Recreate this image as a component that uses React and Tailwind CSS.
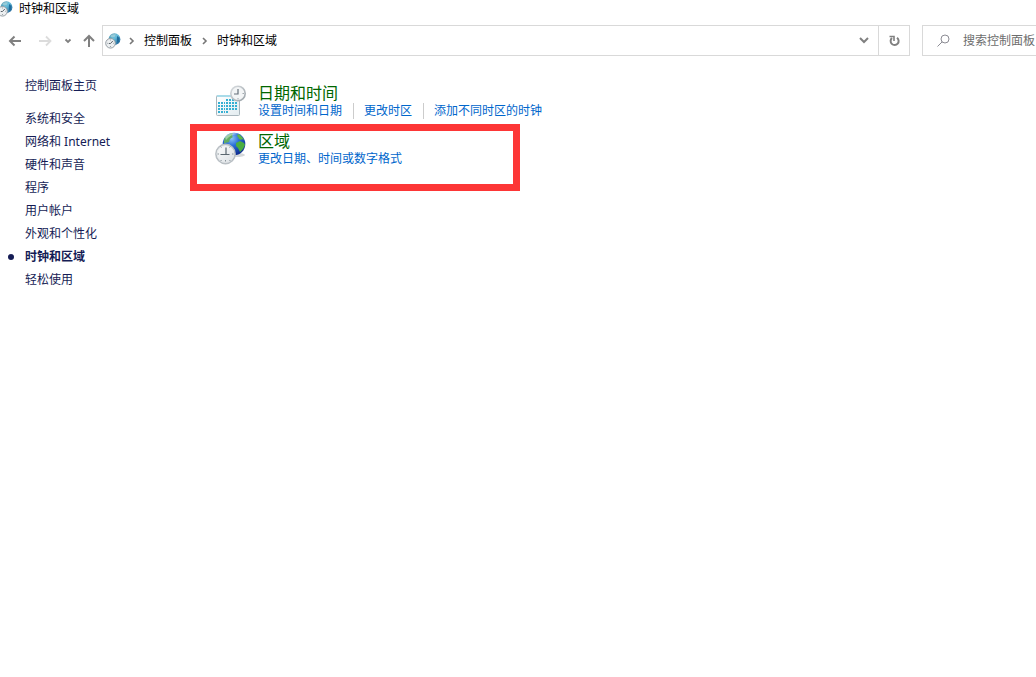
import React from 'react';

const categories = [
    '系统和安全',
    '网络和 Internet',
    '硬件和声音',
    '程序',
    '用户帐户',
    '外观和个性化',
    '时钟和区域',
    '轻松使用',
];

const currentCategory = '时钟和区域';

const SmallClockGlobe = ({ className }) => (
    <svg className={className} width="16" height="16" viewBox="0 0 16 16" aria-hidden="true">
        <defs>
            <linearGradient id="smallGlobe" x1="0" y1="0" x2="1" y2="1">
                <stop offset="0" stopColor="#4b8ba3" />
                <stop offset="0.45" stopColor="#69bfdc" />
                <stop offset="1" stopColor="#16548c" />
            </linearGradient>
        </defs>
        <circle cx="9.500" cy="6.200" r="5.900" fill="url(#smallGlobe)" />
        <path d="M5 3c2-2 4-2.200 6-1.400L9.500 4 7 4.500z" fill="#a5d2dc" opacity="0.8" />
        <path d="M12 3l2.500 2-.6 4-2 1z" fill="#1f6c9c" />
        <circle cx="5.500" cy="10.300" r="4.800" fill="#eceff1" stroke="#959da3" strokeWidth="1" />
        <path d="M5.500 10.500L7.800 8M5.500 10.500H3.800" stroke="#59626a" strokeWidth="1" fill="none" />
        <path d="M5.500 6.500v1M5.500 13v1M2.200 10.300h.8M8.200 10.300H9" stroke="#8a9298" strokeWidth="0.800" />
    </svg>
);

const CalendarIcon = () => (
    <svg width="32" height="34" viewBox="0 0 32 34" aria-hidden="true">
        <defs>
            <linearGradient id="calPage" x1="0" y1="0" x2="1" y2="1">
                <stop offset="0" stopColor="#ffffff" />
                <stop offset="1" stopColor="#e3ecf0" />
            </linearGradient>
            <linearGradient id="calRim" x1="0" y1="0" x2="1" y2="1">
                <stop offset="0" stopColor="#dadee1" />
                <stop offset="1" stopColor="#9aa2a8" />
            </linearGradient>
        </defs>
        <rect x="2.500" y="12.500" width="23" height="20" rx="1" fill="url(#calPage)" stroke="#a9b6bd" />
        <path d="M3 12h22v2H3z" fill="#a9dbe9" />
        <g fill="#35b0d3">
            <path d="M12 16h2v2h-2zM15 16h2v2h-2zM18 16h2v2h-2zM21 16h2v2h-2z" />
            <path d="M4 19h2v2H4zM7 19h2v2H7zM10 19h1v2h-1zM12 19h2v2h-2zM15 19h2v2h-2zM18 19h2v2h-2zM21 19h2v2h-2z" />
            <path d="M4 22h2v2H4zM7 22h2v2H7zM10 22h1v2h-1zM12 22h2v2h-2zM15 22h2v2h-2zM18 22h2v2h-2zM21 22h2v2h-2z" />
            <path d="M4 25h2v2H4zM7 25h2v2H7zM10 25h1v2h-1zM12 25h2v2h-2zM15 25h2v2h-2zM18 25h2v2h-2zM21 25h2v2h-2z" />
            <path d="M4 28h2v2H4zM7 28h2v2H7zM10 28h1v2h-1zM12 28h2v2h-2z" />
        </g>
        <circle cx="24" cy="10.500" r="7.200" fill="#f3f5f6" stroke="url(#calRim)" strokeWidth="1.600" />
        <path d="M24 6v5h-4" stroke="#66717a" strokeWidth="1.200" fill="none" />
        <path d="M24 15v1.500M28.500 10.500H30" stroke="#a0a8ae" />
    </svg>
);

const RegionIcon = () => (
    <svg width="32" height="34" viewBox="0 0 32 34" aria-hidden="true">
        <defs>
            <radialGradient id="ocean" cx="0.4" cy="0.25" r="0.8">
                <stop offset="0" stopColor="#8fc6f5" />
                <stop offset="0.4" stopColor="#2b6fd8" />
                <stop offset="1" stopColor="#0a2488" />
            </radialGradient>
            <linearGradient id="clockFace" x1="0" y1="0" x2="1" y2="1">
                <stop offset="0" stopColor="#ffffff" />
                <stop offset="1" stopColor="#d9dee2" />
            </linearGradient>
        </defs>
        <ellipse cx="22" cy="24" rx="9" ry="2" fill="#b8bcc0" opacity="0.6" />
        <circle cx="20" cy="13" r="11.300" fill="url(#ocean)" />
        <path d="M10 9c1-4 5-6.500 9-7l-1 3 1 1-3 2-1 3-4 1-1 1z" fill="#62ad62" />
        <path d="M24 3c3 1 5 4 6 6l-2-1-1 1-2-1-1-2-1-1z" fill="#5cb548" />
        <path d="M22 12l4-2 4 2 1 2-2 4-3 3-2-4-2-2z" fill="#4bae42" />
        <path d="M11 6c3-4 9-5 13-3-5 0-9 2-12 6z" fill="#ffffff" opacity="0.4" />
        <circle cx="11.500" cy="23" r="9.600" fill="url(#clockFace)" stroke="#b9bfc4" strokeWidth="1.600" />
        <circle cx="11.500" cy="23" r="8.300" fill="none" stroke="#e3e7ea" strokeWidth="0.800" />
        <path d="M12 16.500v7H6.500M12 23.500h3.500" stroke="#5b6770" strokeWidth="1.200" fill="none" />
        <path d="M11.500 29v1.500M18 23h1.500M3.500 23H5M15.500 16.500l.8-1M7.500 16.500l-.8-1M15.500 29l.8 1M7.500 29l-.8 1" stroke="#8a949b" />
    </svg>
);

const Arrow = ({ d, className }) => (
    <svg className={className} width="14" height="14" viewBox="0 0 14 14" fill="none" stroke="currentColor" aria-hidden="true">
        <path d={d} />
    </svg>
);

const Chevron = () => (
    <svg width="6" height="8" viewBox="0 0 6 8" fill="none" stroke="#777777" strokeWidth="1.600" aria-hidden="true">
        <path d="M1 1l3 3-3 3" />
    </svg>
);

const Toolbar = () => (
    <div className="mt-2 flex h-[31px] items-stretch text-[#808080]">
        <nav className="flex w-[102px] shrink-0 items-center pl-2" aria-label="导航">
            <button type="button" aria-label="后退">
                <Arrow className="stroke-2" d="M13 7H2M6.500 2.500L2 7l4.500 4.500" />
            </button>
            <button type="button" aria-label="前进" className="ml-4 text-[#dcdcdc]">
                <Arrow className="stroke-[1.8]" d="M1 7h11.500M8 2.500L12.500 7 8 11.500" />
            </button>
            <button type="button" aria-label="最近浏览的位置" className="ml-3">
                <svg width="8" height="6" viewBox="0 0 8 6" fill="none" stroke="currentColor" strokeWidth="1.800" aria-hidden="true">
                    <path d="M1.500 1.500L4 4l2.500-2.500" />
                </svg>
            </button>
            <button type="button" aria-label="上移" className="ml-2.5">
                <Arrow className="stroke-2" d="M7 13V2M2 7l5-5 5 5" />
            </button>
        </nav>

        <div className="flex min-w-0 flex-1 border border-[#d9d9d9]">
            <div className="flex flex-1 items-center pl-0.5 text-black">
                <SmallClockGlobe />
                <span className="ml-2"><Chevron /></span>
                <a href="#home" className="ml-[9px]">控制面板</a>
                <span className="ml-2.5"><Chevron /></span>
                <a href="#clock" className="ml-[9px]">时钟和区域</a>
            </div>
            <button type="button" aria-label="以前的位置" className="flex w-7 items-center justify-center">
                <svg width="10" height="7" viewBox="0 0 10 7" fill="none" stroke="currentColor" strokeWidth="2" aria-hidden="true">
                    <path d="M1 1l4 4 4-4" />
                </svg>
            </button>
            <button type="button" aria-label="刷新" className="flex w-[31px] items-center justify-center border-l border-[#d9d9d9]">
                <svg width="12" height="12" viewBox="0 0 12 12" fill="none" stroke="currentColor" strokeWidth="2" aria-hidden="true">
                    <path d="M9 2.800A4 4 0 1 1 4 3" />
                    <path d="M1.500 1.500H6V6" strokeWidth="1.600" />
                </svg>
            </button>
        </div>

        <label className="ml-3 flex w-[114px] shrink-0 items-center border-y border-l border-[#d9d9d9] pl-3.5">
            <svg className="shrink-0" width="14" height="14" viewBox="0 0 14 14" fill="none" stroke="#8c8c94" aria-hidden="true">
                <circle cx="8" cy="5" r="4" />
                <path d="M5.200 7.800L.5 12.500" />
            </svg>
            <input
                type="text"
                aria-label="搜索控制面板"
                placeholder="搜索控制面板"
                className="ml-3 min-w-0 flex-1 outline-none placeholder:text-[#6d6d6d]"
            />
        </label>
    </div>
);

const Sidebar = () => (
    <aside className="w-[190px] shrink-0 text-[#151c55]">
        <a href="#home" className="ml-[25px] block h-[23px] leading-[23px]">控制面板主页</a>
        <ul className="mt-2.5">
            {categories.map((name) => (
                <li key={name} className="flex h-[23px] items-center">
                    <span className="flex w-[25px] pl-2">
                        {name === currentCategory && <span className="size-1.5 rounded-full bg-[#151c55]" />}
                    </span>
                    <a href="#category" className={name === currentCategory ? 'font-bold' : ''}>{name}</a>
                </li>
            ))}
        </ul>
    </aside>
);

const Task = ({ icon, title, links }) => (
    <div className="flex">
        <div className="w-11 shrink-0">{icon}</div>
        <div>
            <h2 className="text-base leading-5">
                <a href="#task" className="text-[#006600]">{title}</a>
            </h2>
            <ul className="flex leading-4 text-[#0066cc]">
                {links.map((link, i) => (
                    <li key={link} className={i > 0 ? 'ml-[11px] border-l border-[#cccccc] pl-2.5' : ''}>
                        <a href="#task">{link}</a>
                    </li>
                ))}
            </ul>
        </div>
    </div>
);

export default function App() {
    return (
        <div className="min-h-screen overflow-hidden bg-white font-['Noto_Sans','Noto_Sans_CJK_SC',sans-serif] text-xs text-black">
            <header className="flex h-[17px] items-center">
                <SmallClockGlobe className="-ml-[3px] shrink-0" />
                <h1 className="ml-1.5">时钟和区域</h1>
            </header>

            <Toolbar />

            <div className="mt-[18px] flex">
                <Sidebar />
                <main className="min-w-0 flex-1 pt-[9px]">
                    <div className="pl-6">
                        <Task
                            icon={<CalendarIcon />}
                            title="日期和时间"
                            links={['设置时间和日期', '更改时区', '添加不同时区的时钟']}
                        />
                    </div>
                    <div className="mt-[5px] h-[67px] w-full max-w-[330px] border-7 border-[#fd3636] pl-[17px]">
                        <Task icon={<RegionIcon />} title="区域" links={['更改日期、时间或数字格式']} />
                    </div>
                </main>
            </div>
        </div>
    );
}
